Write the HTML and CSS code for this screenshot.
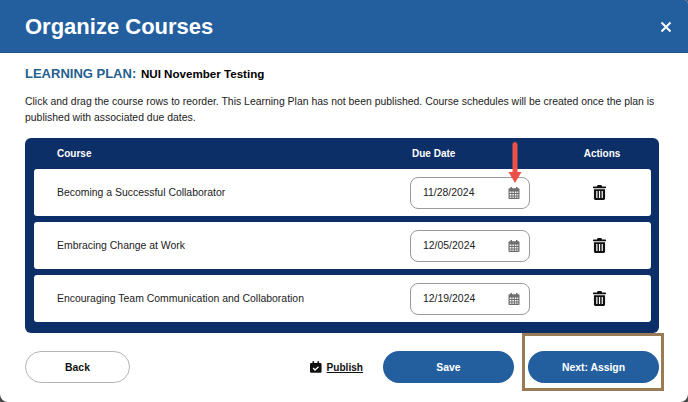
FILE: index.html
```html
<!DOCTYPE html>
<html lang="en">
<head>
<meta charset="utf-8">
<title>Organize Courses</title>
<link rel="stylesheet" href="styles.css">
</head>
<body>
<div class="modal">
  <header class="modal-head">
    <h1>Organize Courses</h1>
    <svg class="close" viewBox="0 0 12 12" aria-label="Close"><path d="M1.500 1.500l9 9M10.500 1.500l-9 9"/></svg>
  </header>
  <main class="modal-body">
    <h2 class="plan"><span class="plan-label">LEARNING PLAN:</span> <span class="plan-name">NUI November Testing</span></h2>
    <p class="intro">Click and drag the course rows to reorder. This Learning Plan has not been published. Course schedules will be created once the plan is published with associated due dates.</p>
    <section class="table">
      <div class="cols thead">
        <span>Course</span><span class="th-date">Due Date</span><span class="th-actions">Actions</span>
      </div>
      <div class="cols row">
        <span>Becoming a Successful Collaborator</span>
        <div class="date"><span>11/28/2024</span><svg class="cal" viewBox="0 0 12 12"><use href="#cal"/></svg></div>
        <svg class="trash" viewBox="0 0 14 16"><use href="#trash"/></svg>
      </div>
      <div class="cols row">
        <span>Embracing Change at Work</span>
        <div class="date"><span>12/05/2024</span><svg class="cal" viewBox="0 0 12 12"><use href="#cal"/></svg></div>
        <svg class="trash" viewBox="0 0 14 16"><use href="#trash"/></svg>
      </div>
      <div class="cols row">
        <span>Encouraging Team Communication and Collaboration</span>
        <div class="date"><span>12/19/2024</span><svg class="cal" viewBox="0 0 12 12"><use href="#cal"/></svg></div>
        <svg class="trash" viewBox="0 0 14 16"><use href="#trash"/></svg>
      </div>
    </section>
    <footer class="actions">
      <button class="btn btn-back">Back</button>
      <a class="publish" href="#">
        <svg class="pub-icon" viewBox="0 0 14 14"><path d="M3 0h2v2h4V0h2v2h1.500A1.500 1.500 0 0 1 14 3.500V12.500A1.500 1.500 0 0 1 12.500 14h-11A1.500 1.500 0 0 1 0 12.500V3.500A1.500 1.500 0 0 1 1.500 2H3z"/><path class="tick" d="M3.800 8.300l2.300 2.300 4.200-4"/></svg>
        <span>Publish</span>
      </a>
      <button class="btn btn-primary">Save</button>
      <button class="btn btn-primary">Next: Assign</button>
    </footer>
  </main>
  <svg class="arrow" viewBox="0 0 14 42"><path d="M4.500 2.500a2.500 2.500 0 0 1 5 0V30H13.500L7 41 .5 30h4z"/></svg>
  <div class="highlight"></div>
</div>
<svg class="defs" aria-hidden="true">
  <symbol id="cal" viewBox="0 0 12 12">
    <path fill-rule="evenodd" d="M2.500 0h1.500v1.200h4V0h1.500v1.200h1.200A.8.8 0 0 1 11.500 2v9.200a.8.8 0 0 1-.8.8H1.300a.8.8 0 0 1-.8-.8V2a.8.8 0 0 1 .8-.8h1.200zM1.700 4.500v1.500h1.700V4.500zm2.700 0v1.500h1.500V4.500zm2.500 0v1.500h1.500V4.500zm2.400 0v1.500h1.000V4.500zM1.700 7v1.400h1.700V7zm2.700 0v1.400h1.500V7zm2.500 0v1.400h1.500V7zm2.400 0v1.400h1.000V7zM1.700 9.400v1.400h1.700V9.400zm2.700 0v1.400h1.500V9.400zm2.500 0v1.400h1.500V9.400zm2.400 0v1.400h1.000V9.400z"/>
  </symbol>
  <symbol id="trash" viewBox="0 0 14 16">
    <path fill-rule="evenodd" d="M5 0h4l.8 1.500H13.500a.5.5 0 0 1 .5.500v1a.5.5 0 0 1-.5.500H.5A.5.500 0 0 1 0 3V2a.5.5 0 0 1 .5-.5h3.700zM1 4.500h12V14.500A1.500 1.500 0 0 1 11.500 16h-9A1.500 1.500 0 0 1 1 14.500zM3.500 6.500v7.500h1.300V6.500zm2.900 0v7.500h1.300V6.500zm2.900 0v7.500h1.300V6.500z"/>
  </symbol>
</svg>
</body>
</html>
```
FILE: styles.css
```css
* { box-sizing: border-box; }
html, body { margin: 0; height: 100%; }
body {
  background: #4a4a4a;
  overflow: hidden;
  font-family: "Liberation Sans", Arial, sans-serif;
  color: #1c1c1c;
}
.modal {
  position: relative;
  width: 688px;
  height: 402px;
  background: #fff;
  border-radius: 0 4px 8px 8px;
  overflow: hidden;
}
.modal-head {
  height: 53px;
  background: #235f9f;
  border-bottom: 1px solid #1d5288;
  display: flex;
  align-items: center;
  justify-content: space-between;
  padding: 1px 16px 0 25px;
}
.modal-head h1 {
  margin: 0;
  font-size: 22px;
  line-height: 1;
  font-weight: 700;
  color: #fff;
}
.close { width: 12px; height: 12px; fill: none; stroke: #fff; stroke-width: 2; }
.modal-body { padding: 9px 29px 0 25px; }
.plan { margin: 0; line-height: 16px; font-weight: 700; }
.plan-label { font-size: 13px; color: #235f8f; }
.plan-name { font-size: 11.600px; color: #000; margin-left: -2px; }
.intro {
  margin: 12px 0 0;
  font-size: 10.450px;
  line-height: 16px;
  width: 632px;
}
.table {
  margin-top: 12px;
  width: 634px;
  height: 195px;
  background: #0b2f66;
  border-radius: 6px;
  padding: 0 8px 0 9px;
}
.cols {
  display: grid;
  grid-template-columns: 353px 120px 1fr;
  align-items: center;
  padding-left: 23px;
  font-size: 10.450px;
}
.thead {
  height: 31px;
  color: #fff;
  font-size: 10px;
  font-weight: 700;
}
.th-date { padding-left: 2px; }
.th-actions { justify-self: center; margin-left: 23px; }
.row {
  height: 47px;
  background: #fff;
  border-radius: 3px;
  margin-bottom: 6px;
  color: #222;
}
.date {
  width: 120px;
  height: 32px;
  border: 1px solid #9a9a9a;
  border-radius: 8px;
  display: flex;
  align-items: center;
  justify-content: space-between;
  padding: 0 9px 0 12px;
  background: #fff;
}
.cal { width: 12px; height: 12px; fill: #6d6d6d; }
.trash { width: 13px; height: 15px; fill: #111; justify-self: center; margin: 0 0 1px 18px; }
.actions {
  margin-top: 18px;
  display: flex;
  align-items: center;
  width: 634px;
}
.btn {
  height: 32px;
  border-radius: 16px;
  font: 700 10.400px "Liberation Sans", Arial, sans-serif;
  cursor: pointer;
}
.btn-back {
  width: 105px;
  background: #fff;
  border: 1px solid #b5b5b5;
  color: #111;
  margin-right: 180px;
}
.btn-primary {
  width: 131px;
  background: #235f9f;
  border: 0;
  color: #fff;
  margin-left: 14px;
}
.publish {
  display: flex;
  align-items: center;
  gap: 5px;
  color: #111;
  font-size: 10.100px;
  font-weight: 700;
  margin-right: 6px;
  flex: none;
  width: 53px;
  white-space: nowrap;
}
.pub-icon { width: 13px; height: 14px; fill: #111; }
.tick { fill: none; stroke: #fff; stroke-width: 1.600; }
.arrow {
  position: absolute;
  left: 508px;
  top: 142px;
  width: 14px;
  height: 42px;
  fill: #ec5148;
}
.highlight {
  position: absolute;
  left: 522px;
  top: 333px;
  width: 142px;
  height: 58px;
  border: 3px solid #9a7b55;
}
.defs { position: absolute; width: 0; height: 0; }
```
